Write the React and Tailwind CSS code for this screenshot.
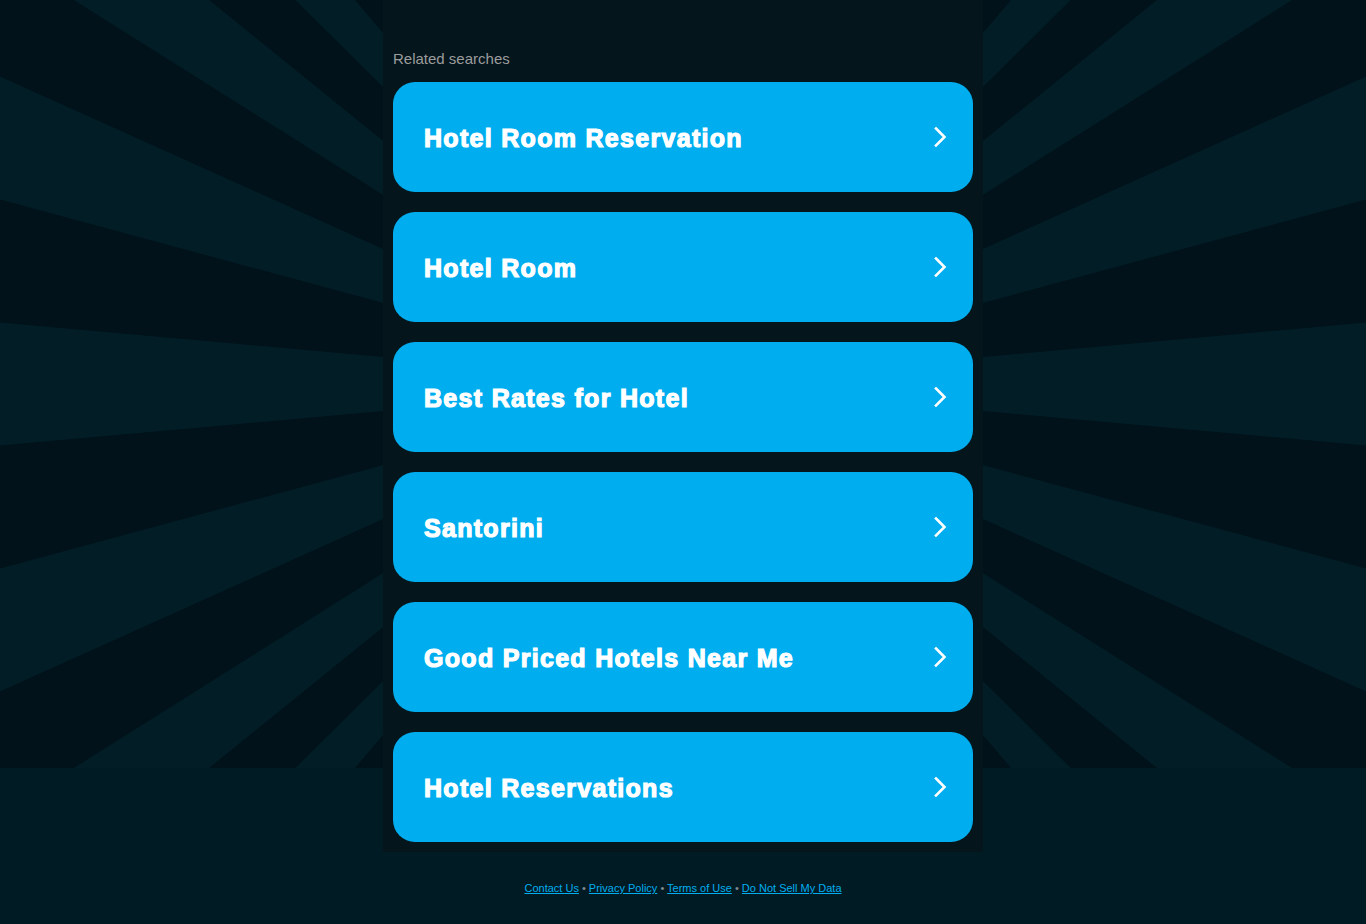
const searches = [
  'Hotel Room Reservation',
  'Hotel Room',
  'Best Rates for Hotel',
  'Santorini',
  'Good Priced Hotels Near Me',
  'Hotel Reservations',
];

const footerLinks = ['Contact Us', 'Privacy Policy', 'Terms of Use', 'Do Not Sell My Data'];

// rays are evenly spaced where they cross the left/right edge (stretched sunburst)
function Sunburst() {
  const cx = 683, cy = 384, step = 123;
  const rays = [];
  for (let m = -40; m <= 40; m += 2) {
    const y1 = cy + step * (m - 0.5);
    const y2 = cy + step * (m + 0.5);
    rays.push(`M${cx},${cy} L0,${y1} L0,${y2} Z`);
    rays.push(`M${cx},${cy} L1366,${y1} L1366,${y2} Z`);
  }
  return (
    <svg className="absolute inset-x-0 top-0" width="1366" height="768" viewBox="0 0 1366 768">
      <rect width="1366" height="768" fill="#01121a" />
      <path d={rays.join(' ')} fill="#021d26" />
    </svg>
  );
}

function Chevron() {
  return (
    <svg width="14" height="22" viewBox="0 0 14 22" fill="none">
      <path d="M3 2.5 L11.5 11 L3 19.5" stroke="white" strokeWidth="2.6" strokeLinecap="square" />
    </svg>
  );
}

export default function App() {
  return (
    <div className="relative min-h-screen w-full overflow-hidden bg-[#011b24] font-['Liberation_Sans',Arial,sans-serif]">
      <Sunburst />
      <div className="relative flex flex-col items-center">
        <div className="w-[600px] bg-[#04151c] px-[10px] pt-[51px] pb-[10px]">
          <p className="text-[15px] leading-4 text-[#9c9c9c] mb-[15px]">Related searches</p>
          <div className="flex flex-col gap-5">
            {searches.map(s => (
              <a key={s} href="#"
                className="h-[110px] rounded-[22px] bg-[#00aeef] flex items-center justify-between pl-[31px] pr-[26px]">
                <span className="pt-[4px] text-[25px] font-bold text-white [-webkit-text-stroke:1.2px_white] tracking-[1.3px]">{s}</span>
                <Chevron />
              </a>
            ))}
          </div>
        </div>
        <div className="mt-[28px] text-[11px] leading-4 text-[#7f8b90]">
          {footerLinks.map((l, i) => (
            <span key={l}>
              {i > 0 && <span> • </span>}
              <a href="#" className="text-[#00aeef] underline">{l}</a>
            </span>
          ))}
        </div>
      </div>
    </div>
  );
}
